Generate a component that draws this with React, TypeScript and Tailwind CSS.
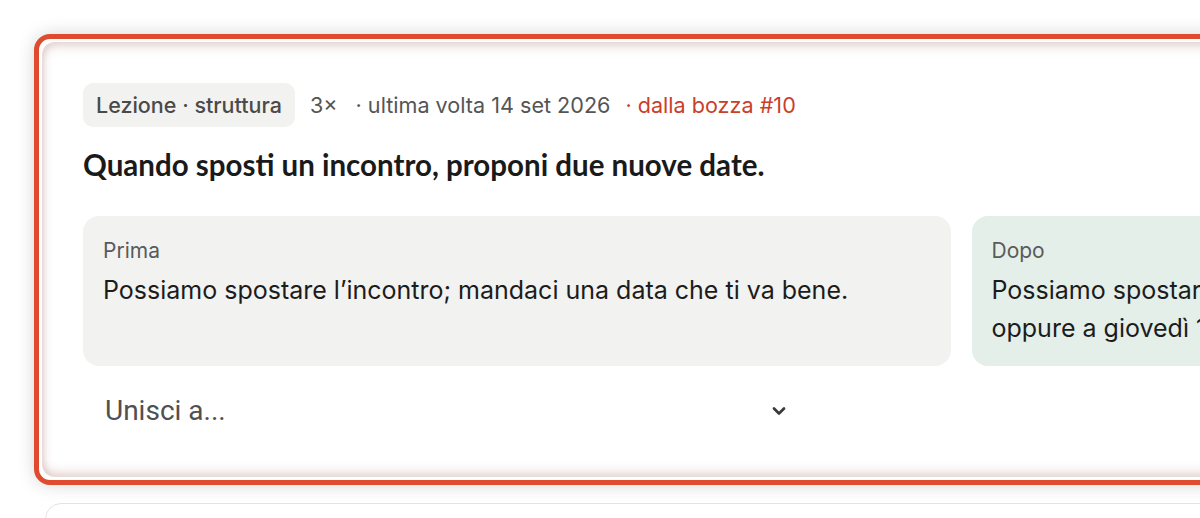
import { ChevronDown } from "lucide-react";

const inter = { fontFamily: "Inter, 'Noto Sans', sans-serif" };

export default function App() {
  return (
    <div className="w-[1200px] h-[518px] overflow-hidden bg-white" style={inter}>
      <div className="pl-[34px] pt-[34px] flex flex-col gap-[18px] w-[1900px]">
        <div className="w-[1854px] rounded-[16px] border-[5px] border-[#e04b2f] bg-white p-[3px] shadow-[0_0_18px_rgba(0,0,0,0.16)]">
          <div className="rounded-[12px] border border-[#e6dcda] bg-white px-[40px] pt-[40px] pb-[34px] shadow-[inset_0_8px_12px_-6px_rgba(170,110,100,0.35),inset_0_-8px_12px_-6px_rgba(170,110,100,0.35),inset_6px_0_10px_-6px_rgba(170,110,100,0.25)]">
            <div className="flex items-center gap-[15px] text-[21.6px] text-[#555555]">
              <span className="h-[44px] flex items-center px-[13px] rounded-[10px] bg-[#f2f2f0] text-[#4a4a4a] text-[21.5px] font-medium">
                Lezione · struttura
              </span>
              <span>3×</span>
              <span className="ml-[3px]">· ultima volta 14 set 2026</span>
              <span className="text-[#c9402a]">· dalla bozza #10</span>
            </div>
            <h2
              className="mt-[20px] text-[29.5px] font-bold text-[#1a1a1a] leading-[36px]"
              style={{ fontFamily: "Lato, Inter, sans-serif" }}
            >
              Quando sposti un incontro, proponi due nuove date.
            </h2>
            <div className="mt-[33px] grid grid-cols-2 gap-[21px]">
              <div className="h-[150px] rounded-[16px] bg-[#f2f2f0] px-[20px] pt-[22px]">
                <div className="text-[21px] text-[#5a5a5a] leading-[26px]">Prima</div>
                <div className="mt-[7px] text-[25px] text-[#1c1c1c] leading-[38px]">
                  Possiamo spostare l’incontro; mandaci una data che ti va bene.
                </div>
              </div>
              <div className="h-[150px] rounded-[16px] bg-[#e3efe8] px-[20px] pt-[22px]">
                <div className="text-[21px] text-[#5a5a5a] leading-[26px]">Dopo</div>
                <div className="mt-[7px] text-[25px] text-[#1c1c1c] leading-[38px]">
                  Possiamo spostare l’incontro a martedì 16 alle 10:00
                  <br />
                  oppure a giovedì 18 alle 15:00: quale preferisci?
                </div>
              </div>
            </div>
            <div className="mt-[14px] w-[716px] h-[62px] flex items-center justify-between pl-[22px] pr-[10px]">
              <span
                className="text-[28px] text-[#505050]"
                style={{ fontFamily: "Roboto, sans-serif" }}
              >
                Unisci a...
              </span>
              <ChevronDown className="w-[20px] h-[20px] text-[#3a3a3a]" strokeWidth={3.25} />
            </div>
          </div>
        </div>
        <div className="ml-[11px] w-[1840px] h-[120px] rounded-[16px] border border-[#e3e3e3] bg-white" />
      </div>
    </div>
  );
}
